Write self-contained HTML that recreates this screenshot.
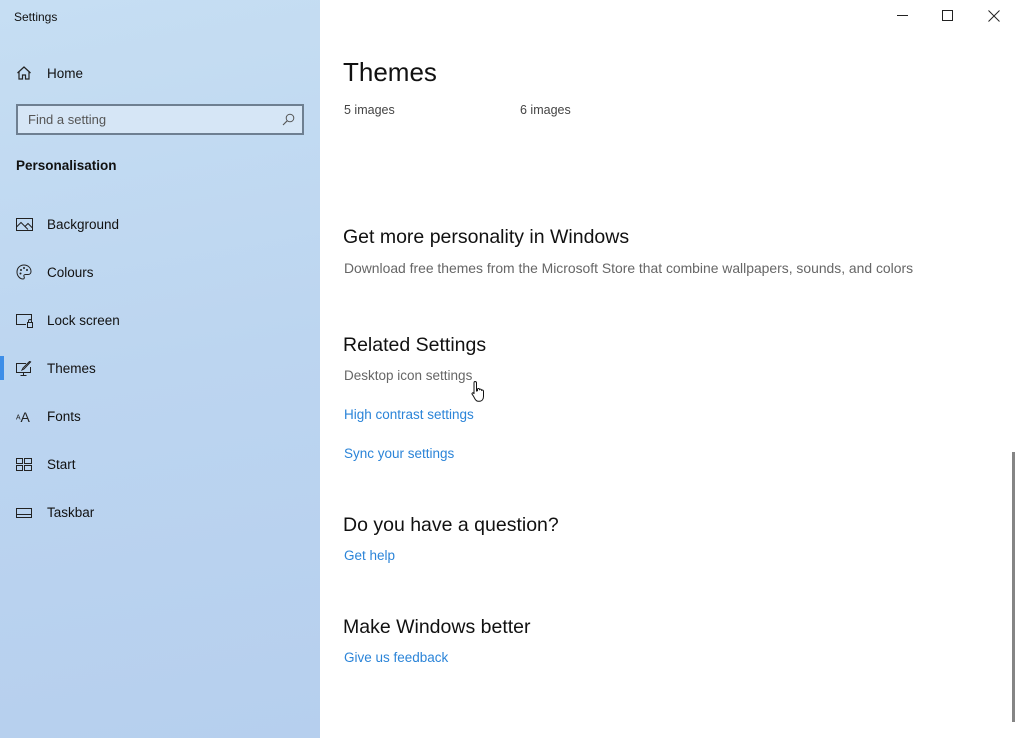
<!DOCTYPE html>
<html><head><meta charset="utf-8"><style>
*{margin:0;padding:0;box-sizing:border-box}
body{width:1017px;height:738px;overflow:hidden;font-family:"Liberation Sans",sans-serif;background:#fff;position:relative;color:#000}
.side{position:absolute;left:0;top:0;width:320px;height:738px;background:linear-gradient(170deg,#c6def3 0%,#bcd5f0 50%,#b6cfee 100%)}
.a{position:absolute;white-space:nowrap}
.nav{position:absolute;left:47px;font-size:13.5px;color:#111}
.ic{position:absolute;left:16px}
.search{position:absolute;left:16px;top:104px;width:288px;height:31px;border:2px solid #6e7f91;background:#d6e6f6}
.main .h{font-size:19.5px;color:#111}
.link{font-size:13.5px;color:#2b84d8}
.grey{font-size:13.5px;color:#666}
</style></head><body>
<div class="side">
<div class="a" style="left:14px;top:10px;font-size:12px;color:#111">Settings</div>
<svg class="ic" style="top:66px" width="16" height="14" viewBox="0 0 16 14"><path d="M1.5 7 8 1l6.5 6M3 5.8V13h3.5V9h3v4H13V5.8" fill="none" stroke="#222" stroke-width="1.2"/></svg>
<div class="nav" style="top:66px">Home</div>
<div class="search"><div class="a" style="left:10px;top:6px;font-size:13px;color:#555">Find a setting</div>
<svg class="a" style="right:7px;top:7px" width="13" height="13" viewBox="0 0 13 13"><circle cx="8" cy="5" r="3.8" fill="none" stroke="#555" stroke-width="1"/><path d="M5.3 7.7 1 12" stroke="#555" stroke-width="1.1"/></svg></div>
<div class="a" style="left:16px;top:158px;font-size:13.5px;font-weight:bold;color:#111">Personalisation</div>
<svg class="ic" style="top:218px" width="17" height="13" viewBox="0 0 17 13"><rect x=".5" y=".5" width="16" height="12" fill="none" stroke="#222"/><path d="M.5 9 5 4.5l7 7M9 8.5l3-3 4.5 4.5" fill="none" stroke="#222"/></svg>
<div class="nav" style="top:217px">Background</div>
<svg class="ic" style="top:264px" width="16" height="16" viewBox="0 0 16 16"><path d="M8 1C4 1 1 4 1 8s3 7 6 7c1.5 0 1.5-1.5 1-2.5s0-2 1.5-2H12c2 0 3-1.5 3-3C15 4 12 1 8 1z" fill="none" stroke="#222"/><circle cx="5" cy="6" r="1" fill="#222"/><circle cx="8" cy="4" r="1" fill="#222"/><circle cx="11" cy="6" r="1" fill="#222"/><circle cx="4.5" cy="9.5" r="1" fill="#222"/></svg>
<div class="nav" style="top:265px">Colours</div>
<svg class="ic" style="top:314px" width="17" height="14" viewBox="0 0 17 14"><path d="M10 10.5H.5v-10h15V6" fill="none" stroke="#222"/><rect x="11.5" y="8.5" width="5" height="5" fill="none" stroke="#222"/><path d="M12.5 8.5V7a1.5 1.5 0 0 1 3 0v1.5" fill="none" stroke="#222"/></svg>
<div class="nav" style="top:313px">Lock screen</div>
<div class="a" style="left:0;top:356px;width:4px;height:24px;background:#3d8ee8"></div>
<svg class="ic" style="top:361px" width="16" height="15" viewBox="0 0 16 15"><path d="M10 2.5H.5v9h14V6M7.5 11.5v3M4.5 14.5h6" fill="none" stroke="#222"/><path d="M15 .5 8 8l-2 1 1-2L14 0" fill="none" stroke="#222"/></svg>
<div class="nav" style="top:361px">Themes</div>
<div class="a" style="left:16px;top:409px;font-size:10px;color:#222">ᴬ<span style="font-size:14px">A</span></div>
<div class="nav" style="top:409px">Fonts</div>
<svg class="ic" style="top:458px" width="16" height="13" viewBox="0 0 16 13"><rect x=".5" y=".5" width="6" height="5" fill="none" stroke="#222"/><rect x="8.5" y=".5" width="7" height="5" fill="none" stroke="#222"/><rect x=".5" y="7.5" width="6" height="5" fill="none" stroke="#222"/><rect x="8.5" y="7.5" width="7" height="5" fill="none" stroke="#222"/></svg>
<div class="nav" style="top:457px">Start</div>
<svg class="ic" style="top:508px" width="16" height="10" viewBox="0 0 16 10"><rect x=".5" y=".5" width="15" height="9" fill="none" stroke="#222"/><path d="M.5 6.5h15" stroke="#222"/></svg>
<div class="nav" style="top:505px">Taskbar</div>
</div>
<div class="main">
<svg class="a" style="left:897px;top:15px" width="12" height="2"><rect width="11" height="1" fill="#222"/></svg>
<svg class="a" style="left:942px;top:10px" width="12" height="12"><rect x=".5" y=".5" width="10" height="10" fill="none" stroke="#222"/></svg>
<svg class="a" style="left:988px;top:10px" width="12" height="12"><path d="M.5.5l11 11M11.5.5l-11 11" stroke="#222"/></svg>
<div class="a" style="left:343px;top:57px;font-size:26px;color:#111">Themes</div>
<div class="a" style="left:344px;top:103px;font-size:12.5px;color:#444">5 images</div>
<div class="a" style="left:520px;top:103px;font-size:12.5px;color:#444">6 images</div>
<div class="a h" style="left:343px;top:226px">Get more personality in Windows</div>
<div class="a grey" style="left:344px;top:260px;font-size:13.9px">Download free themes from the Microsoft Store that combine wallpapers, sounds, and colors</div>
<div class="a h" style="left:343px;top:334px">Related Settings</div>
<div class="a grey" style="left:344px;top:368px">Desktop icon settings</div>
<svg class="a" style="left:471px;top:380px" width="16" height="24" viewBox="0 0 16 24"><path d="M4 1.5c1 0 1.5.6 1.5 1.5v8l1-.3V9c.8-.8 2-.6 2 .5.8-.7 2-.4 2 .7.8-.5 2 0 2 1v5c0 3-1.5 5-4 5H7c-2 0-3-2-4.5-5L1 14c-.3-.9.8-1.7 1.7-.8L3 14V3c0-1 .5-1.5 1-1.5z" fill="#fff" stroke="#111"/></svg>
<div class="a link" style="left:344px;top:407px">High contrast settings</div>
<div class="a link" style="left:344px;top:446px">Sync your settings</div>
<div class="a h" style="left:343px;top:514px">Do you have a question?</div>
<div class="a link" style="left:344px;top:548px">Get help</div>
<div class="a h" style="left:343px;top:616px">Make Windows better</div>
<div class="a link" style="left:344px;top:650px">Give us feedback</div>
<div class="a" style="left:1012px;top:452px;width:3px;height:270px;background:#858585"></div>
</div>
</body></html>
